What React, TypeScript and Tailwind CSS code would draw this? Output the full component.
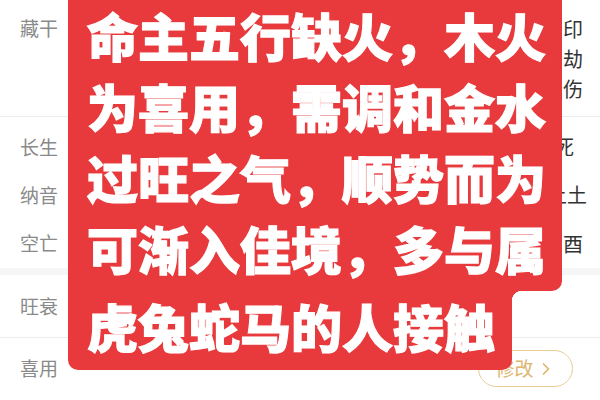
import { ChevronRight } from 'lucide-react'

const font = { fontFamily: '"Noto Sans CJK SC", "Noto Sans", sans-serif' }

function Row({ label, value, className = '' }: { label: string; value: React.ReactNode; className?: string }) {
  return (
    <div className={`flex items-center ${className}`}>
      <div className="w-[525px] shrink-0 pl-5 text-[19px] text-[#8a8a8a]">{label}</div>
      <div className="w-[75px] shrink-0 whitespace-nowrap text-[20px] text-[#333]">{value}</div>
    </div>
  )
}

export default function App() {
  return (
    <div className="relative h-[400px] w-[600px] overflow-hidden bg-white" style={font}>
      {/* 藏干 */}
      <div className="flex h-[117px] items-start border-b border-[#ececec] pt-[14px]">
        <div className="w-[563px] shrink-0 pl-5 text-[19px] leading-[28px] text-[#8a8a8a]">藏干</div>
        <div className="flex flex-col text-[20px] leading-[30px] text-[#333]">
          <span>印</span>
          <span>劫</span>
          <span>伤</span>
        </div>
      </div>

      {/* 长生 / 纳音 / 空亡 */}
      <div className="pt-[6px]">
        <Row label="长生" value={<span className="ml-[29px]">死</span>} className="h-[48px]" />
        <Row label="纳音" value={<span className="ml-[2px]">壁上土</span>} className="h-[48px]" />
        <Row label="空亡" value={<span className="ml-[18px]">申酉</span>} className="h-[49px]" />
      </div>
      <div className="h-[7px] bg-[#f6f6f6]" />

      {/* 旺衰 */}
      <div className="flex h-[63px] items-center border-b border-[#ececec] pl-5 text-[19px] text-[#8a8a8a]">旺衰</div>

      {/* 喜用 */}
      <div className="flex h-[61px] items-center justify-between pl-5 pr-[27px]">
        <span className="text-[19px] text-[#8a8a8a]">喜用</span>
        <button className="flex h-[37px] w-[95px] items-center justify-center gap-[2px] rounded-full border-[1.5px] border-[#e8cd96] text-[19px] text-[#dcb56e]">
          修改
          <ChevronRight size={20} strokeWidth={2} />
        </button>
      </div>

      {/* red caption overlay */}
      <div className="absolute left-[68px] top-0 text-[51px] font-black leading-[71px] text-white [-webkit-text-stroke:1.2px_white]">
        <div className="w-[494px] whitespace-nowrap rounded-br-[10px] bg-[#e83a3c] pb-[7px] pl-[19px]">
          <div>命主五行缺火，木火</div>
          <div>为喜用，需调和金水</div>
          <div>过旺之气，顺势而为</div>
          <div>可渐入佳境，多与属</div>
        </div>
        <div className="relative w-[444px] whitespace-nowrap rounded-b-[10px] bg-[#e83a3c] pb-2 pl-[19px]">
          虎兔蛇马的人接触
          <div className="absolute left-[444px] top-0 h-[10px] w-[10px] bg-[radial-gradient(circle_at_100%_100%,transparent_10px,#e83a3c_10.5px)]" />
        </div>
      </div>
    </div>
  )
}
